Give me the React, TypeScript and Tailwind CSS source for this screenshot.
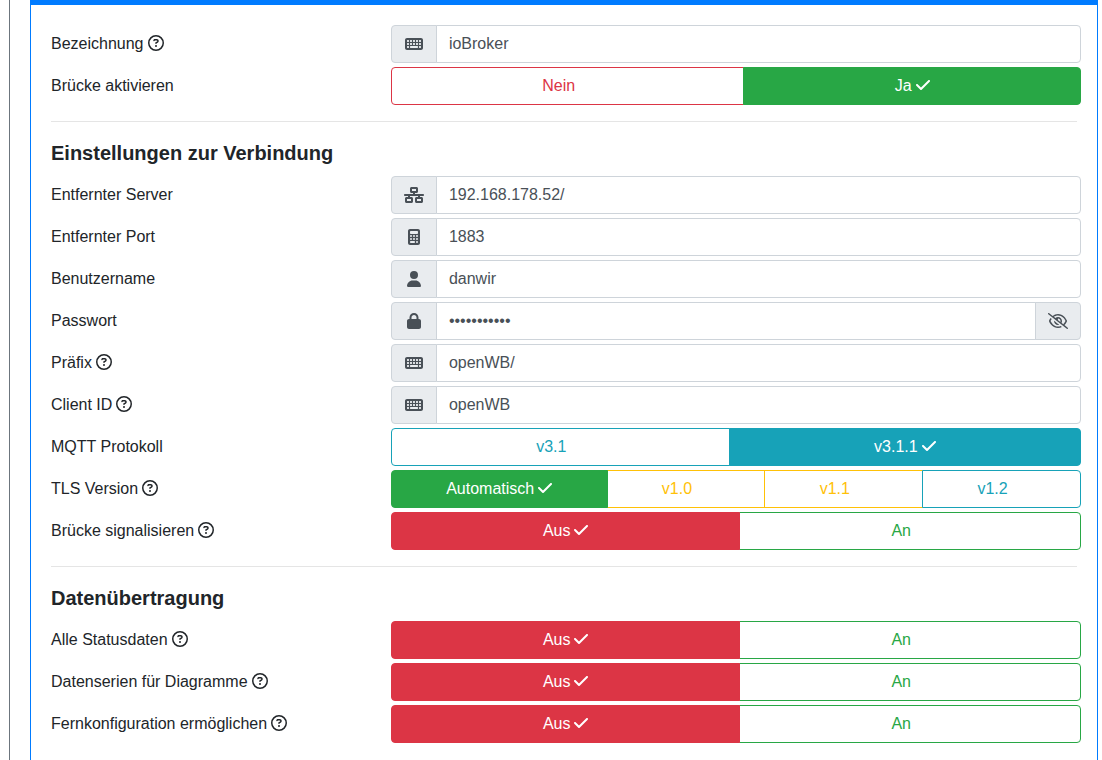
import { useId, useState } from "react";
import type { ReactNode } from "react";
import clsx from "clsx";
import {
  FaCalculator,
  FaCheck,
  FaKeyboard,
  FaLock,
  FaNetworkWired,
  FaRegCircleQuestion,
  FaRegEyeSlash,
  FaUser,
} from "react-icons/fa6";

type Tone = "red" | "green" | "teal" | "yellow";

interface Option {
  label: string;
  tone: Tone;
}

const OUTLINE: Record<Tone, string> = {
  red: "border-[#dc3545] text-[#dc3545] bg-white",
  green: "border-[#28a745] text-[#28a745] bg-white",
  teal: "border-[#17a2b8] text-[#17a2b8] bg-white",
  yellow: "border-[#ffc107] text-[#ffc107] bg-white",
};

const SOLID: Record<Tone, string> = {
  red: "border-[#dc3545] bg-[#dc3545] text-white",
  green: "border-[#28a745] bg-[#28a745] text-white",
  teal: "border-[#17a2b8] bg-[#17a2b8] text-white",
  yellow: "border-[#ffc107] bg-[#ffc107] text-[#212529]",
};

const OFF_ON: Option[] = [
  { label: "Aus", tone: "red" },
  { label: "An", tone: "green" },
];

function Row({ children }: { children: ReactNode }) {
  return <div className="mb-1 -mr-1 grid grid-cols-[33%_67%]">{children}</div>;
}

function HelpButton() {
  return (
    <button
      type="button"
      aria-label="Hilfe"
      className="ml-1 inline-block cursor-pointer align-[-2px]"
    >
      <FaRegCircleQuestion className="block size-4" />
    </button>
  );
}

interface TextRowProps {
  label: string;
  value: string;
  icon: ReactNode;
  help?: boolean;
  password?: boolean;
}

function TextRow({ label, value, icon, help, password }: TextRowProps) {
  const id = useId();
  const [visible, setVisible] = useState(false);
  return (
    <Row>
      <div className="py-[7px]">
        <label htmlFor={id}>{label}</label>
        {help && <HelpButton />}
      </div>
      <div className="flex h-[38px] min-w-0 text-[#495057]">
        <span className="flex w-[46px] shrink-0 items-center justify-center rounded-l border border-[#ced4da] bg-[#e9ecef]">
          {icon}
        </span>
        <input
          id={id}
          type={password && !visible ? "password" : "text"}
          defaultValue={value}
          className={clsx(
            "-ml-px min-w-0 flex-1 border border-[#ced4da] bg-white px-3 py-1.5 outline-none focus:border-[#80bdff]",
            !password && "rounded-r",
          )}
        />
        {password && (
          <button
            type="button"
            aria-label="Passwort anzeigen"
            onClick={() => setVisible(!visible)}
            className="-ml-px flex w-[46px] shrink-0 cursor-pointer items-center justify-center rounded-r border border-[#ced4da] bg-[#e9ecef]"
          >
            <FaRegEyeSlash className="h-4 w-5" />
          </button>
        )}
      </div>
    </Row>
  );
}

interface ChoiceRowProps {
  label: string;
  options: Option[];
  initial: string;
  help?: boolean;
}

function ChoiceRow({ label, options, initial, help }: ChoiceRowProps) {
  const id = useId();
  const [selected, setSelected] = useState(initial);
  return (
    <Row>
      <div className="py-[7px]">
        <span id={id}>{label}</span>
        {help && <HelpButton />}
      </div>
      <div role="radiogroup" aria-labelledby={id} className="flex min-w-0">
        {options.map((option) => {
          const active = option.label === selected;
          return (
            <label
              key={option.label}
              className={clsx(
                "relative -ml-px flex-auto cursor-pointer border px-3 py-1.5 text-center first:ml-0 first:rounded-l last:rounded-r",
                active ? SOLID[option.tone] : OUTLINE[option.tone],
                active && "z-10",
              )}
            >
              <input
                type="radio"
                name={id}
                checked={active}
                onChange={() => setSelected(option.label)}
                className="sr-only"
              />
              {option.label}
              <FaCheck
                className={clsx("ml-1 inline-block h-4 w-3.5 align-[-2px]", !active && "invisible")}
              />
            </label>
          );
        })}
      </div>
    </Row>
  );
}

function Heading({ children }: { children: ReactNode }) {
  return <h2 className="mb-[11px] text-xl leading-6 font-bold">{children}</h2>;
}

function Divider() {
  return <hr className="mt-4 mb-[19px] border-[#e5e5e5]" />;
}

export default function App() {
  const keyboard = <FaKeyboard className="h-4 w-[18px]" />;
  return (
    <div className="ml-[9px] flex min-h-screen border-l border-[#6c757d] bg-white pr-1 pl-5 font-['Liberation_Sans',Arial,sans-serif] text-base text-[#212529]">
      <main className="min-w-0 flex-1 border-x border-[#007bff]">
        <div className="h-[5px] bg-[#007bff]" />
        <form className="px-5 pt-5" onSubmit={(event) => event.preventDefault()}>
          <section>
            <TextRow label="Bezeichnung" value="ioBroker" icon={keyboard} help />
            <ChoiceRow
              label="Brücke aktivieren"
              options={[
                { label: "Nein", tone: "red" },
                { label: "Ja", tone: "green" },
              ]}
              initial="Ja"
            />
          </section>
          <Divider />
          <section>
            <Heading>Einstellungen zur Verbindung</Heading>
            <TextRow
              label="Entfernter Server"
              value="192.168.178.52/"
              icon={<FaNetworkWired className="h-4 w-5" />}
            />
            <TextRow
              label="Entfernter Port"
              value="1883"
              icon={<FaCalculator className="h-4 w-3" />}
            />
            <TextRow label="Benutzername" value="danwir" icon={<FaUser className="h-4 w-3.5" />} />
            <TextRow
              label="Passwort"
              value="openwb12345"
              icon={<FaLock className="h-4 w-3.5" />}
              password
            />
            <TextRow label="Präfix" value="openWB/" icon={keyboard} help />
            <TextRow label="Client ID" value="openWB" icon={keyboard} help />
            <ChoiceRow
              label="MQTT Protokoll"
              options={[
                { label: "v3.1", tone: "teal" },
                { label: "v3.1.1", tone: "teal" },
              ]}
              initial="v3.1.1"
            />
            <ChoiceRow
              label="TLS Version"
              options={[
                { label: "Automatisch", tone: "green" },
                { label: "v1.0", tone: "yellow" },
                { label: "v1.1", tone: "yellow" },
                { label: "v1.2", tone: "teal" },
              ]}
              initial="Automatisch"
              help
            />
            <ChoiceRow label="Brücke signalisieren" options={OFF_ON} initial="Aus" help />
          </section>
          <Divider />
          <section>
            <Heading>Datenübertragung</Heading>
            <ChoiceRow label="Alle Statusdaten" options={OFF_ON} initial="Aus" help />
            <ChoiceRow label="Datenserien für Diagramme" options={OFF_ON} initial="Aus" help />
            <ChoiceRow label="Fernkonfiguration ermöglichen" options={OFF_ON} initial="Aus" help />
          </section>
        </form>
      </main>
    </div>
  );
}
